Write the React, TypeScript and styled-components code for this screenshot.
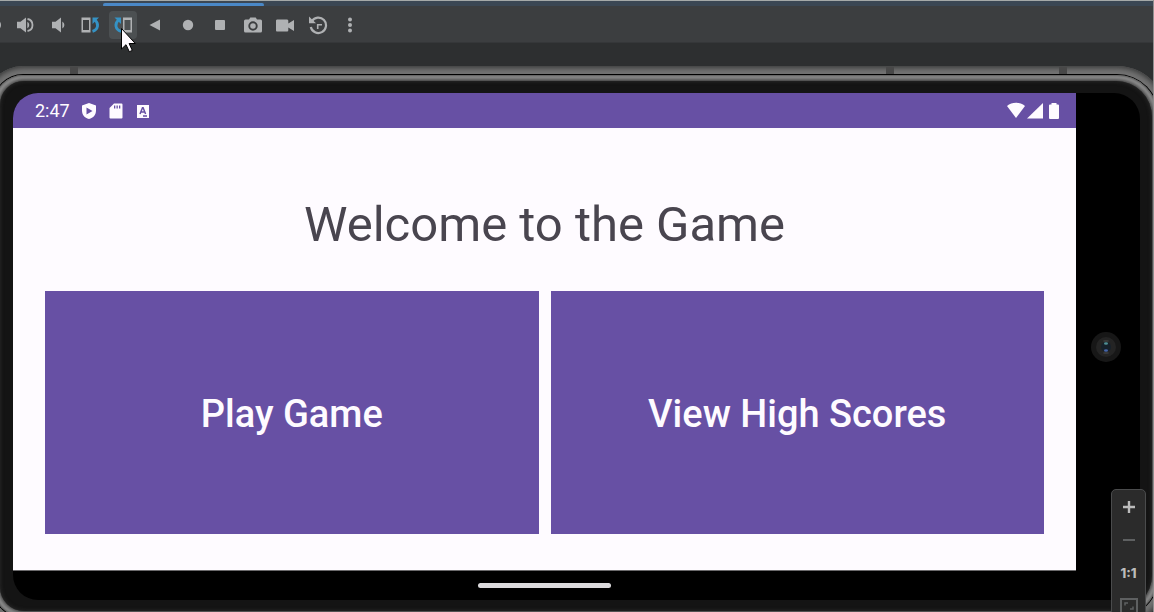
import React from "react";
import styled, { createGlobalStyle } from "styled-components";

const purple = "#6750a4";
const paper = "#fefbff";
const icon = "#afb1b3";

const GlobalStyle = createGlobalStyle`
  * { box-sizing: border-box; }
  body { margin: 0; background: #2b2d2e; font-family: Roboto, "Liberation Sans", sans-serif; }
  button { font-family: inherit; border: 0; padding: 0; }
  svg { display: block; }
`;

const Window = styled.div`
  position: relative;
  display: flex;
  flex-direction: column;
  min-height: 100vh;
  overflow: hidden;
  border-right: 1px solid #8f8f8f;
`;

const TabStrip = styled.div`
  height: 6px;
  padding: 2px 0 0 103px;
  background: #3b4754;
  border-top: 1px solid #a5a9a8;
`;

const ActiveTab = styled.div`
  width: 161px;
  height: 4px;
  border-radius: 2px;
  background: #4a88c7;
`;

const Toolbar = styled.header`
  height: 37px;
  background: #3c3e40;
  border-bottom: 1px solid #353739;
  padding-top: 5px;
`;

const ToolGroup = styled.div`
  display: flex;
  justify-content: space-between;
  width: 385px;
  margin-left: -21px;
`;

const ToolButton = styled.button<{ $active?: boolean }>`
  display: grid;
  place-items: center;
  width: 28px;
  height: 28px;
  border-radius: 4px;
  color: ${icon};
  background: ${(p) => (p.$active ? "#4c5052" : "transparent")};
`;

const Canvas = styled.main`
  position: relative;
  flex: 1;
  display: flex;
  flex-direction: column;
  overflow: hidden;
  background: #2d2f30;
`;

const Shell = styled.div`
  position: relative;
  flex: 1;
  display: flex;
  margin: 23px -14px -14px -15px;
  padding: 8px;
  border-radius: 38px 50px 50px 38px;
  background: #727272;
  box-shadow: inset 0 0 5px 2px #3a3b3b;
`;

const Seam = styled.div`
  flex: 1;
  display: flex;
  padding: 1px;
  border-radius: 30px 42px 42px 30px;
  background: #000000;
`;

const Rim = styled.div`
  flex: 1;
  display: flex;
  padding: 6px;
  border-radius: 29px 41px 41px 29px;
  background: #929292;
  box-shadow: inset 0 0 2px 1px #5c5c5c;
`;

const Bezel = styled.div`
  flex: 1;
  display: flex;
  padding: 12px 12px 11px 13px;
  border-radius: 24px 36px 36px 24px;
  background: #141414;
  box-shadow: 0 0 4px 1px #262626, inset 0 0 4px #2e2e2e;
`;

const AntennaBand = styled.span<{ $left?: number; $right?: number }>`
  position: absolute;
  top: 1px;
  ${(p) => (p.$left !== undefined ? `left: ${p.$left}px;` : `right: ${p.$right}px;`)}
  width: 8px;
  height: 7px;
  background: #484848;
`;

const Display = styled.div`
  flex: 1;
  display: flex;
  overflow: hidden;
  border-radius: 25px 26px 26px 25px;
  background: #000000;
`;

const AppColumn = styled.div`
  flex: 1;
  display: flex;
  flex-direction: column;
`;

const CutoutColumn = styled.div`
  display: flex;
  align-items: center;
  width: 64px;
  padding-left: 15px;
`;

const StatusBar = styled.div`
  display: flex;
  align-items: center;
  height: 35px;
  padding: 0 14px 0 22px;
  background: ${purple};
  color: ${paper};
`;

const Clock = styled.time`
  font-size: 18px;
  line-height: 24px;
  margin-right: 11px;
`;

const Notices = styled.div`
  display: flex;
  flex: 1;
  gap: 11px;
`;

const Signals = styled.div`
  display: flex;
  align-items: center;
`;

const Home = styled.section`
  flex: 1;
  display: flex;
  flex-direction: column;
  padding: 65px 32px 36px;
  background: ${paper};
  border-bottom: 1px solid #6b6a6c;
`;

const Title = styled.h1`
  margin: 0 0 34px;
  font-size: 49px;
  line-height: 64px;
  font-weight: 400;
  text-align: center;
  color: #49454f;
`;

const Choices = styled.div`
  flex: 1;
  display: grid;
  grid-template-columns: 1fr 1fr;
  gap: 12px;
`;

const Choice = styled.button`
  padding: 2px 0 0;
  background: ${purple};
  color: ${paper};
  font-size: 38px;
  line-height: 48px;
  font-weight: 500;
`;

const NavBar = styled.div`
  display: flex;
  justify-content: center;
  align-items: center;
  height: 29px;
`;

const Pill = styled.div`
  width: 133px;
  height: 5px;
  border-radius: 3px;
  background: #dcdadd;
`;

const ZoomPanel = styled.div`
  position: absolute;
  right: 7px;
  bottom: -11px;
  display: flex;
  flex-direction: column;
  width: 35px;
  border: 1px solid #4a4b4c;
  border-radius: 5px;
  background: #2b2b2b;
`;

const ZoomButton = styled.button<{ $dim?: boolean }>`
  display: grid;
  place-items: center;
  height: 33px;
  background: transparent;
  color: ${(p) => (p.$dim ? "#5e6061" : "#bbbbbb")};
  font-family: Inter, "Liberation Sans", sans-serif;
  font-size: 13px;
  line-height: 16px;
  font-weight: 800;
`;

const Pointer = styled.svg`
  position: absolute;
  left: 120px;
  top: 27px;
`;

const Glyph = ({ children, size = 20 }: { children: React.ReactNode; size?: number }) => (
  <svg width={size} height={size} viewBox={`0 0 ${size} ${size}`} fill="currentColor" aria-hidden="true">
    {children}
  </svg>
);

const tools: { label: string; active?: boolean; art: React.ReactNode }[] = [
  { label: "Power", art: <circle cx="12" cy="10" r="6" /> },
  {
    label: "Volume up",
    art: (
      <>
        <path d="M2 6.800h3.500L11 2.500v15l-5.500-4.300H2z" />
        <path d="M12.300 6.800a3.600 3.600 0 0 1 0 6.400z" />
        <path d="M12.500 4a6.100 6.100 0 0 1 0 12" fill="none" stroke="currentColor" strokeWidth="1.800" />
      </>
    ),
  },
  {
    label: "Volume down",
    art: (
      <>
        <path d="M4 6.800h3.500L13 2.500v15l-5.500-4.300H4z" />
        <path d="M14.300 6.500a4 4 0 0 1 0 7z" />
      </>
    ),
  },
  {
    label: "Rotate left",
    art: (
      <>
        <path d="M1.500 2.500h9v15h-9zM3 5v10h6V5z" fillRule="evenodd" />
        <path d="M12.500 16.300C18.500 14.500 19 8.500 15 5" fill="none" stroke="#3592c4" strokeWidth="2.800" />
        <path d="M12.500 2.500h6.500L12.500 9z" fill="#3592c4" />
      </>
    ),
  },
  {
    label: "Rotate right",
    active: true,
    art: (
      <>
        <path d="M10 2.500h9v15h-9zM11.500 5v10h6V5z" fillRule="evenodd" />
        <path d="M8 16.300C2 14.500 1.500 8.500 5.500 5" fill="none" stroke="#3592c4" strokeWidth="2.800" />
        <path d="M8 2.500H1.500L8 9z" fill="#3592c4" />
      </>
    ),
  },
  { label: "Back", art: <path d="M4.500 10L15 4.500v11z" /> },
  { label: "Home", art: <circle cx="10" cy="10" r="5.200" /> },
  { label: "Overview", art: <rect x="5" y="5" width="10" height="10" rx="1" /> },
  {
    label: "Take screenshot",
    art: (
      <>
        <path
          fillRule="evenodd"
          d="M7.300 2.500h5.400l1.300 2h3.500A1.500 1.500 0 0 1 19 6v10a1.500 1.500 0 0 1-1.500 1.500h-15A1.500 1.500 0 0 1 1 16V6a1.500 1.500 0 0 1 1.500-1.500H6zM10 6.300a4.700 4.700 0 1 0 0 9.400a4.700 4.700 0 0 0 0-9.400z"
        />
        <circle cx="10" cy="11" r="2.800" />
      </>
    ),
  },
  {
    label: "Record screen",
    art: <path d="M2.500 4.500H12A1.300 1.300 0 0 1 13.300 6v2.500L19 5v11l-5.700-3.500V15a1.300 1.300 0 0 1-1.300 1.500H2.500A1.300 1.300 0 0 1 1 15V6a1.300 1.300 0 0 1 1.500-1.500z" />,
  },
  {
    label: "Snapshots",
    art: (
      <>
        <path d="M3.800 6.200A7.700 7.700 0 1 1 2.800 12" fill="none" stroke="currentColor" strokeWidth="2.200" />
        <path d="M1 1.500v6.800h7z" />
        <path d="M14 9.700H9.700V14" fill="none" stroke="currentColor" strokeWidth="1.600" />
      </>
    ),
  },
  {
    label: "More",
    art: (
      <>
        <circle cx="10" cy="4.500" r="2" />
        <circle cx="10" cy="10" r="2" />
        <circle cx="10" cy="15.500" r="2" />
      </>
    ),
  },
];

export default function App() {
  return (
    <Window>
      <GlobalStyle />
      <TabStrip>
        <ActiveTab />
      </TabStrip>
      <Toolbar>
        <ToolGroup role="toolbar" aria-label="Emulator controls">
          {tools.map((t) => (
            <ToolButton key={t.label} aria-label={t.label} $active={t.active}>
              <Glyph>{t.art}</Glyph>
            </ToolButton>
          ))}
        </ToolGroup>
      </Toolbar>
      <Canvas>
        <Shell>
          <AntennaBand $left={85} />
          <AntennaBand $right={273} />
          <AntennaBand $right={100} />
          <Seam>
            <Rim>
              <Bezel>
                <Display>
                  <AppColumn>
                    <StatusBar>
                      <Clock>2:47</Clock>
                      <Notices>
                        <Glyph size={16}>
                          <path fillRule="evenodd" d="M8 0l7 2.500v5C15 11.500 12.500 15 8 16C3.500 15 1 11.500 1 7.500v-5zM5.500 4.500v7l6-3.500z" />
                        </Glyph>
                        <Glyph size={16}>
                          <path fillRule="evenodd" d="M6 .5h7.500a1 1 0 0 1 1 1v13a1 1 0 0 1-1 1h-11a1 1 0 0 1-1-1V5zM6 2.500v3h1.300v-3zM8.500 2.500v3h1.300v-3zM11 2.500v3h1.300v-3z" />
                        </Glyph>
                        <Glyph size={16}>
                          <rect x="2" y="2" width="12" height="13" />
                          <path d="M5 11L7.500 4.800h.6L10.600 11M5.900 9h3.800M8 13h4" fill="none" stroke={purple} strokeWidth="1.500" />
                        </Glyph>
                      </Notices>
                      <Signals>
                        <Glyph size={20}>
                          <path d="M1 5C6 .8 14 .8 19 5L10 17z" />
                        </Glyph>
                        <Glyph size={20}>
                          <path d="M17 2v15.500H1z" />
                        </Glyph>
                        <Glyph size={16}>
                          <path d="M5.500 0h5v1.500h1.500a1 1 0 0 1 1 1V15a1 1 0 0 1-1 1H4a1 1 0 0 1-1-1V2.500a1 1 0 0 1 1-1h1.500z" />
                        </Glyph>
                      </Signals>
                    </StatusBar>
                    <Home>
                      <Title>Welcome to the Game</Title>
                      <Choices>
                        <Choice>Play Game</Choice>
                        <Choice>View High Scores</Choice>
                      </Choices>
                    </Home>
                    <NavBar>
                      <Pill />
                    </NavBar>
                  </AppColumn>
                  <CutoutColumn>
                    <Glyph size={30}>
                      <circle cx="15" cy="15" r="15" fill="#171717" />
                      <circle cx="15" cy="15" r="10" fill="#242424" />
                      <circle cx="15" cy="15" r="5" fill="#16202a" />
                      <ellipse cx="15" cy="9" rx="3" ry="1" fill="#3a3a3a" />
                      <ellipse cx="15" cy="21" rx="3" ry="1" fill="#3a3a3a" />
                      <ellipse cx="15" cy="11.500" rx="2" ry="1.200" fill="#4f8f94" />
                      <ellipse cx="15" cy="18.500" rx="2" ry="1.200" fill="#4664a8" />
                    </Glyph>
                  </CutoutColumn>
                </Display>
              </Bezel>
            </Rim>
          </Seam>
        </Shell>
        <ZoomPanel>
          <ZoomButton aria-label="Zoom in">
            <Glyph size={16}>
              <path d="M6.800 2h2.400v4.800H14v2.400H9.200V14H6.800V9.200H2V6.800h4.800z" />
            </Glyph>
          </ZoomButton>
          <ZoomButton aria-label="Zoom out" $dim>
            <Glyph size={16}>
              <path d="M2 7h12v2H2z" />
            </Glyph>
          </ZoomButton>
          <ZoomButton>1:1</ZoomButton>
          <ZoomButton aria-label="Fit to window" $dim>
            <Glyph size={18}>
              <path d="M1 2h16v14H1z" fill="none" stroke="currentColor" strokeWidth="2" />
              <path d="M5 8.500V6h3M13 9.500V12h-3" fill="none" stroke="currentColor" strokeWidth="1.500" />
            </Glyph>
          </ZoomButton>
        </ZoomPanel>
      </Canvas>
      <Pointer width="18" height="26" viewBox="0 0 18 26" aria-hidden="true">
        <path d="M1.500 1.500v20.500l4.500-4.300 3.300 7 3-1.300-3.200-6.900h6.200z" fill={paper} stroke="#000000" strokeWidth="1" />
      </Pointer>
    </Window>
  );
}
